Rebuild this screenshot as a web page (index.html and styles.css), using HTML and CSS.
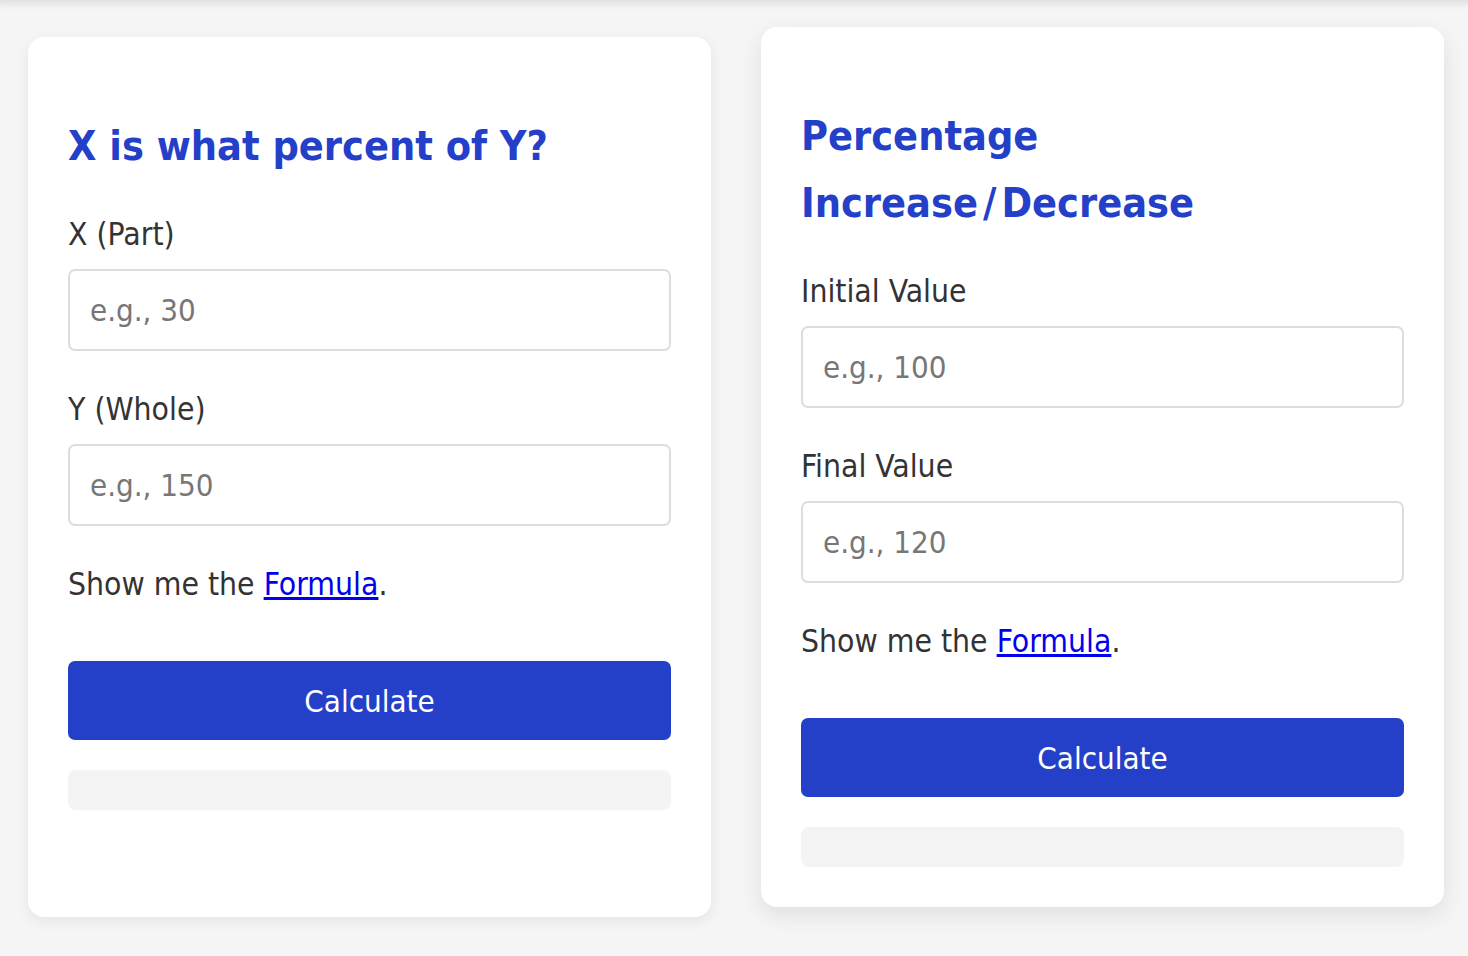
FILE: index.html
```html
<!DOCTYPE html>
<html lang="en">
<head>
<meta charset="utf-8">
<title>Percentage Calculators</title>
<link rel="stylesheet" href="styles.css">
</head>
<body>
<main class="grid">
  <section class="card">
    <h2 class="card-title">X is what percent of Y?</h2>
    <div class="field">
      <label class="label" for="x">X (Part)</label>
      <input class="input" id="x" type="text" placeholder="e.g., 30">
    </div>
    <div class="field">
      <label class="label" for="y">Y (Whole)</label>
      <input class="input" id="y" type="text" placeholder="e.g., 150">
    </div>
    <p class="formula">Show me the <a href="#" class="link">Formula</a>.</p>
    <button class="btn" type="button">Calculate</button>
    <div class="result"></div>
  </section>
  <section class="card card-raised">
    <h2 class="card-title">Percentage<br>Increase<span class="slash">/</span>Decrease</h2>
    <div class="field">
      <label class="label" for="iv">Initial Value</label>
      <input class="input" id="iv" type="text" placeholder="e.g., 100">
    </div>
    <div class="field">
      <label class="label" for="fv">Final Value</label>
      <input class="input" id="fv" type="text" placeholder="e.g., 120">
    </div>
    <p class="formula">Show me the <a href="#" class="link">Formula</a>.</p>
    <button class="btn" type="button">Calculate</button>
    <div class="result"></div>
  </section>
</main>
</body>
</html>
```
FILE: styles.css
```css
* { box-sizing: border-box; }
html, body { margin: 0; padding: 0; }
body {
  background: #f5f5f5;
  font-family: "DejaVu Sans Condensed", "DejaVu Sans", sans-serif;
  font-stretch: condensed;
  color: #333;
  min-height: 956px;
  box-shadow: inset 0 10px 10px -8px rgba(0,0,0,0.12);
}
.grid {
  display: grid;
  grid-template-columns: 683px 683px;
  column-gap: 50px;
  padding: 37px 24px 0 28px;
  align-items: stretch;
}
.card {
  background: #fff;
  border-radius: 16px;
  padding: 40px 40px 40px;
  box-shadow: 0 4px 14px rgba(0,0,0,0.07);
}
.card-raised {
  transform: translateY(-10px);
  box-shadow: 0 8px 22px rgba(0,0,0,0.09);
}
.card-title {
  margin: 36px 0 31px;
  font-size: 41px;
  line-height: 67px;
  font-weight: bold;
  color: #2540c8;
}
.slash { padding: 0 5px; }
.field { margin-bottom: 35px; }
.label {
  display: block;
  font-size: 31.6px;
  line-height: 46px;
  margin-bottom: 12px;
  color: #333;
}
.input {
  display: block;
  width: 100%;
  height: 82px;
  border: 2px solid #ddd;
  border-radius: 7px;
  padding: 0 20px;
  font-family: inherit;
  font-stretch: condensed;
  font-size: 31px;
  color: #333;
  background: #fff;
  outline: none;
}
.input::placeholder { color: #777; }
.formula {
  font-size: 31.6px;
  line-height: 46px;
  margin: 1px 0 54px;
}
.link { color: #0000ee; text-decoration: underline; }
.btn {
  display: block;
  width: 100%;
  height: 79px;
  border: 0;
  border-radius: 7px;
  background: #2540c8;
  color: #fff;
  font-family: inherit;
  font-stretch: condensed;
  font-size: 31px;
  cursor: pointer;
}
.result {
  margin-top: 30px;
  height: 40px;
  background: #f4f4f4;
  border-radius: 8px;
}
```
